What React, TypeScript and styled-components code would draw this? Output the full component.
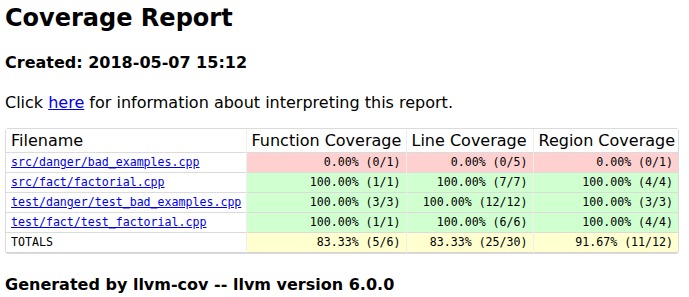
import { FC } from 'react';
import styled, { createGlobalStyle } from 'styled-components';

type Level = 'red' | 'green' | 'yellow';

interface ICell {
	text: string;
	level: Level;
}

interface IRow {
	file: string;
	link: boolean;
	cells: ICell[];
}

const levelColors: Record<Level, string> = {
	red: '#ffd0d0',
	green: '#d0ffd0',
	yellow: '#ffffd0',
};

const pct = (hit: number, total: number): ICell => {
	const value = (hit / total) * 100;
	let level: Level = 'yellow';
	if (value === 100) level = 'green';
	else if (value < 80) level = 'red';
	return { text: `${value.toFixed(2)}% (${hit}/${total})`, level };
};

const rows: IRow[] = [
	{ file: 'src/danger/bad_examples.cpp', link: true, cells: [pct(0, 1), pct(0, 5), pct(0, 1)] },
	{ file: 'src/fact/factorial.cpp', link: true, cells: [pct(1, 1), pct(7, 7), pct(4, 4)] },
	{ file: 'test/danger/test_bad_examples.cpp', link: true, cells: [pct(3, 3), pct(12, 12), pct(3, 3)] },
	{ file: 'test/fact/test_factorial.cpp', link: true, cells: [pct(1, 1), pct(6, 6), pct(4, 4)] },
	{
		file: 'TOTALS',
		link: false,
		cells: [
			{ text: '83.33% (5/6)', level: 'yellow' },
			{ text: '83.33% (25/30)', level: 'yellow' },
			{ text: '91.67% (11/12)', level: 'yellow' },
		],
	},
];

const columns = [
	{ title: 'Filename', width: 240 },
	{ title: 'Function Coverage', width: 160 },
	{ title: 'Line Coverage', width: 127 },
	{ title: 'Region Coverage', width: 145 },
];

const GlobalStyle = createGlobalStyle`
	html, body {
		margin: 0;
		padding: 0;
		background: #ffffff;
	}
	body {
		font-family: 'DejaVu Sans', 'Noto Sans', sans-serif;
		color: #000000;
	}
`;

const Page = styled.div`
	padding: 4px 5px 0;
`;

const Title = styled.h2`
	margin: 0 0 20px;
	font-size: 24px;
	font-weight: bold;
`;

const SubTitle = styled.h4<{ $last?: boolean }>`
	margin: 21px 0 ${p => (p.$last ? '0' : '21px')};
	font-size: 16px;
	font-weight: bold;
`;

const Intro = styled.p`
	margin: 16px 0;
	font-size: 16px;
`;

const Link = styled.a`
	color: #0000ee;
	text-decoration: underline;
`;

const Centered = styled.div`
	display: table;
	border: 1px solid #dbdbdb;
	border-radius: 3px;
`;

const Table = styled.table`
	width: 672px;
	border-collapse: collapse;
	table-layout: fixed;
`;

const Row = styled.tr`
	background: #ffffff;
	border-bottom: 1px solid #dbdbdb;

	&:last-child {
		border-bottom: 1px solid #d4d4d4;
	}
`;

const HeadCell = styled.td<{ $width: number }>`
	width: ${p => p.$width}px;
	box-sizing: border-box;
	padding: 2px 5px;
	font-size: 16px;
	line-height: 19px;
	text-align: left;
	vertical-align: top;
	border-right: 1px solid #eeeeee;
	white-space: nowrap;
	overflow: visible;

	&:last-child {
		border-right: none;
	}
`;

const Cell = styled.td<{ $level?: Level }>`
	padding: 2px 5px;
	vertical-align: top;
	text-align: ${p => (p.$level ? 'right' : 'left')};
	background: ${p => (p.$level ? levelColors[p.$level] : '#ffffff')};
	border-right: 1px solid #eeeeee;

	&:last-child {
		border-right: none;
	}
`;

const Mono = styled.pre`
	margin: 0;
	font-family: 'DejaVu Sans Mono', 'Liberation Mono', monospace;
	font-size: 11.6px;
	line-height: 15px;
`;

const App: FC = () => {
	return (
		<Page>
			<GlobalStyle />
			<Title>Coverage Report</Title>
			<SubTitle>Created: 2018-05-07 15:12</SubTitle>
			<Intro>
				Click <Link href='#'>here</Link> for information about interpreting this report.
			</Intro>
			<Centered>
				<Table>
					<tbody>
						<Row>
							{columns.map(col => (
								<HeadCell key={col.title} $width={col.width}>
									{col.title}
								</HeadCell>
							))}
						</Row>
						{rows.map(row => (
							<Row key={row.file}>
								<Cell>
									<Mono>{row.link ? <Link href='#'>{row.file}</Link> : row.file}</Mono>
								</Cell>
								{row.cells.map((cell, i) => (
									<Cell key={i} $level={cell.level}>
										<Mono>{cell.text}</Mono>
									</Cell>
								))}
							</Row>
						))}
					</tbody>
				</Table>
			</Centered>
			<SubTitle $last>Generated by llvm-cov -- llvm version 6.0.0</SubTitle>
		</Page>
	);
};

export default App;
